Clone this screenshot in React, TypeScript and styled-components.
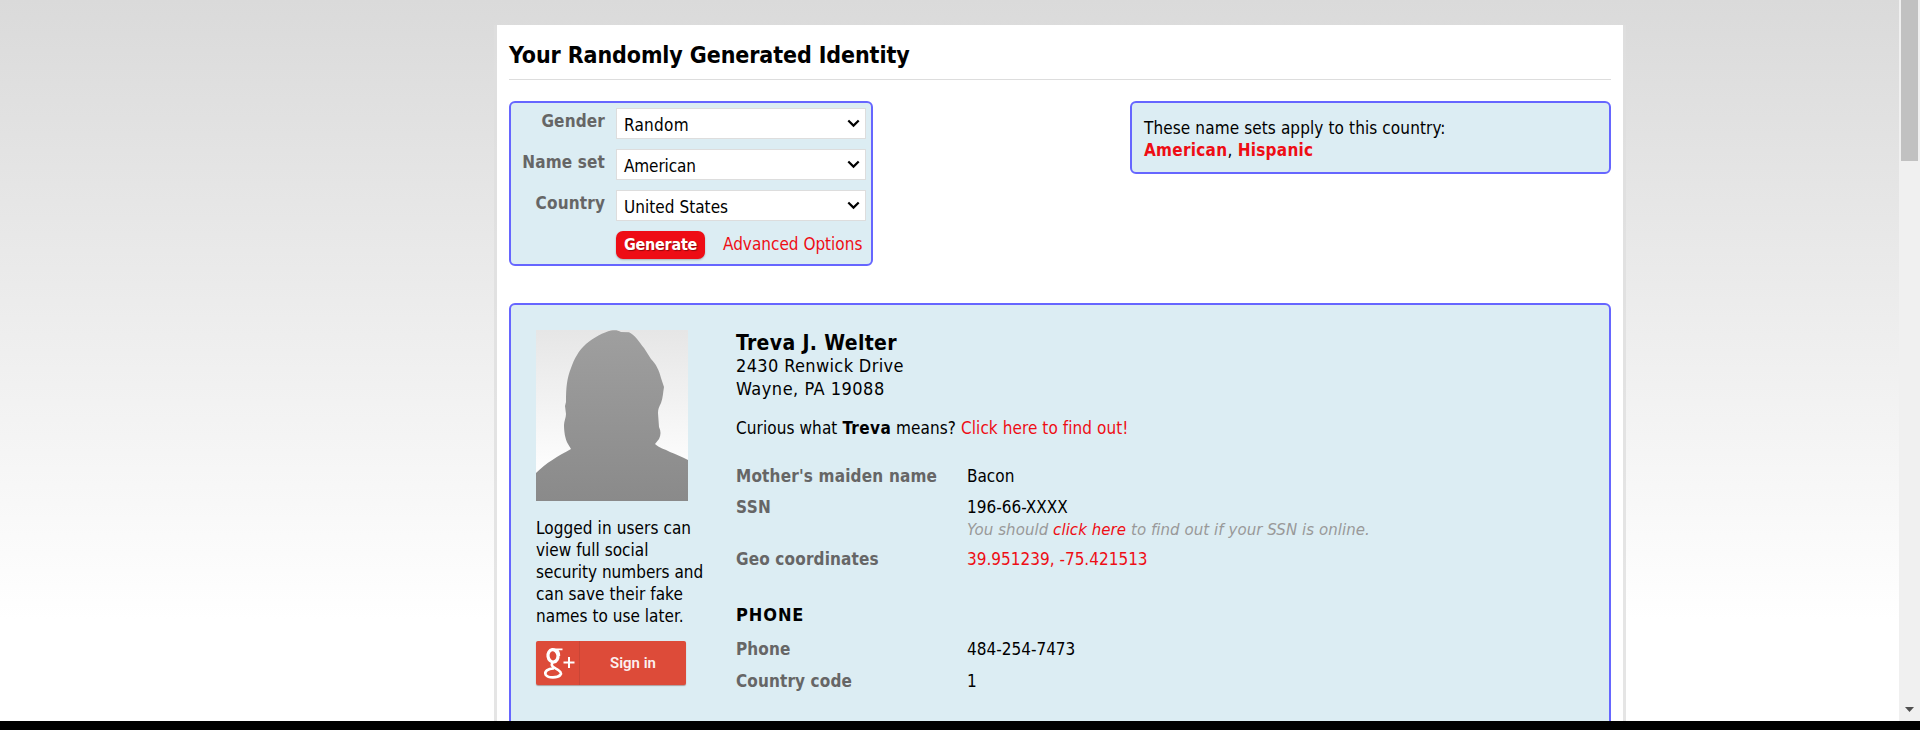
import React from 'react';
import styled, { createGlobalStyle } from 'styled-components';

const Global = createGlobalStyle`
  *, *::before, *::after { box-sizing: border-box; }
  html, body { margin: 0; padding: 0; }
  body {
    font-family: 'DejaVu Sans Condensed', 'DejaVu Sans', sans-serif;
    font-stretch: condensed;
    font-size: 17px;
    line-height: 22px;
    color: #000;
    white-space: nowrap;
    overflow: hidden;
  }
`;

const Screen = styled.div`
  height: 730px;
  display: flex;
  flex-direction: column;
  background: #000;
`;
const Viewport = styled.div`
  height: 721px;
  display: flex;
  overflow: hidden;
`;
const Page = styled.div`
  flex: 1;
  padding: 25px 0 0 494px;
  background: linear-gradient(#dadada 0, #ffffff 620px);
`;
const Sheet = styled.main`
  width: 1132px;
  height: 720px;
  padding: 0 12px;
  background: #fff;
  background-clip: padding-box;
  border: solid rgba(223, 223, 223, 0.8);
  border-width: 0 3px;
`;
const Title = styled.h1`
  margin: 0;
  height: 55px;
  padding-top: 16px;
  border-bottom: 1px solid #ddd;
  font-size: 23px;
  line-height: 28px;
`;
const TopRow = styled.div`
  display: flex;
  justify-content: space-between;
  align-items: flex-start;
  margin-top: 21px;
  height: 202px;
`;
const Panel = styled.section`
  background: #dcedf3;
  border: 2px solid #6666ff;
  border-radius: 6px;
`;
const FormPanel = styled(Panel)`
  width: 364px;
  height: 165px;
  padding-top: 5px;
`;
const NotePanel = styled(Panel)`
  width: 481px;
  height: 73px;
  padding: 14px 12px 0;
`;
const Field = styled.div`
  display: flex;
  height: 41px;
`;
const FieldLabel = styled.label`
  width: 94px;
  margin-right: 11px;
  padding-top: 2px;
  text-align: right;
  font-weight: bold;
  color: #666;
`;
const Select = styled.div`
  display: flex;
  align-items: center;
  justify-content: space-between;
  width: 250px;
  height: 31px;
  padding: 2px 5px 0 7px;
  background: #fff;
  border: 1px solid #ddd;
  svg { margin-top: -3px; }
`;
const Actions = styled.div`
  display: flex;
  padding-left: 105px;
`;
const Generate = styled.button`
  width: 89px;
  height: 28px;
  padding: 0;
  border: 0;
  border-radius: 7px;
  background: #ee0d15;
  box-shadow: 0 1px 2px rgba(0, 0, 0, 0.25);
  color: #fff;
  font: bold 16px/28px 'DejaVu Sans Condensed', 'DejaVu Sans', sans-serif;
  text-shadow: 1px 1px 1px rgba(0, 0, 0, 0.4);
`;
const Link = styled.a<{ $bold?: boolean }>`
  color: #ee0d15;
  font-weight: ${(p) => (p.$bold ? 'bold' : 'normal')};
`;
const Advanced = styled.div`
  margin: 2px 0 0 18px;
`;
const Identity = styled(Panel)`
  display: flex;
  height: 440px;
  padding: 25px;
`;
const Aside = styled.aside`
  width: 200px;
`;
const LoginNote = styled.p`
  margin: 16px 0 14px;
`;
const SignIn = styled.button`
  display: flex;
  width: 150px;
  height: 44px;
  padding: 0;
  border: 0;
  border-radius: 2px;
  background: #dd4b39;
  box-shadow: 0 1px 1px rgba(120, 60, 50, 0.45);
  color: #fff;
`;
const GoogleMark = styled.span`
  width: 44px;
  height: 44px;
  border-right: 1px solid #c94636;
`;
const SignInText = styled.span`
  flex: 1;
  text-align: center;
  font: 600 15px/45px Roboto, sans-serif;
  opacity: 0.92;
`;
const Details = styled.div`
  padding-top: 1px;
`;
const Name = styled.h3`
  margin: 0;
  font-size: 21px;
  line-height: 24px;
`;
const Address = styled.div`
  margin-top: -1px;
  font-size: 18px;
  line-height: 23px;
`;
const Meaning = styled.p`
  margin: 17px 0 0;
`;
const Heading = styled.h3`
  margin: 0;
  padding-top: 34px;
  font-size: 18px;
  line-height: 22px;
`;
const Row = styled.dl<{ $top: number }>`
  display: flex;
  margin: 0;
  padding-top: ${(p) => p.$top}px;
`;
const Term = styled.dt`
  width: 231px;
  font-weight: bold;
  color: #666;
`;
const Value = styled.dd`
  margin: 0;
`;
const Hint = styled.div`
  padding-top: 1px;
  font: italic 15px/22px 'DejaVu Sans', sans-serif;
  font-stretch: normal;
  color: #999;
`;
const T = styled.span<{ $ls: number }>`
  letter-spacing: ${(p) => p.$ls}px;
`;
const Scrollbar = styled.div`
  width: 21px;
  display: flex;
  flex-direction: column;
  justify-content: space-between;
  align-items: center;
  padding-bottom: 9px;
  background: #f0f0f0;
`;
const Thumb = styled.div`
  width: 17px;
  height: 161px;
  background: #c1c1c1;
`;

const Chevron = () => (
  <svg width="13" height="9" viewBox="0 0 13 9" fill="none" stroke="#000" strokeWidth="2.2">
    <path d="M1.3 1.500 6.500 6.600 11.700 1.500" />
  </svg>
);

const Photo = styled.svg`
  display: block;
`;

const Silhouette = () => (
  <Photo width="152" height="171" viewBox="0 0 152 171">
    <defs>
      <linearGradient id="bg" x1="0" y1="0" x2="0" y2="1">
        <stop offset="0" stopColor="#e6e6e6" />
        <stop offset="0.8" stopColor="#fdfdfd" />
      </linearGradient>
      <linearGradient id="fg" x1="0" y1="0" x2="0" y2="1">
        <stop offset="0" stopColor="#9f9f9f" />
        <stop offset="1" stopColor="#8a8a8a" />
      </linearGradient>
    </defs>
    <rect width="152" height="171" fill="url(#bg)" />
    <path
      fill="url(#fg)"
      d="M0 143C10 133 22 126 35 119L32 114C29 109 28 101 28 95C28 91 30 88 30 84L29 76L30 72C30 57 31 48 35 38C38 29 43 20 50 14C57 8 68 2 75 0.500C79 0 82 0 85 2L93 2.300C99 5 103 12 108 18L115 29C120 34 123 40 125 48L128 57C127 62 127 68 125 73C123 77 122 79 122 83L123 97C125 101 125 105 123 109L119 114C123 118 129 119 134 122C140 124 146 127 152 130V171H0Z"
    />
  </Photo>
);

const GooglePlus = () => (
  <svg width="43" height="44" viewBox="0 0 43 44">
    <g fill="none" stroke="#fff">
      <ellipse cx="17" cy="14.800" rx="5" ry="6.200" strokeWidth="3.200" transform="rotate(-8 17 14.800)" />
      <path strokeWidth="1.800" d="M16 8.300H26.500M20.500 8.500Q23.500 10.500 23.300 15" />
      <path strokeWidth="2.600" d="M17 21C14.500 24 16 25.300 19.500 27.300C24.500 30 26 32 24.300 34C21.500 37 12.500 37.300 9.800 34C7.800 30.500 12 27.300 18 27.500" />
      <path strokeWidth="2" d="M27.500 21.500H38.500M33 16V27" />
    </g>
  </svg>
);

type SelectFieldProps = { label: string; value: string; labelSpacing: number; valueSpacing: number };

const SelectField = ({ label, value, labelSpacing, valueSpacing }: SelectFieldProps) => (
  <Field>
    <FieldLabel><T $ls={labelSpacing}>{label}</T></FieldLabel>
    <Select><T $ls={valueSpacing}>{value}</T><Chevron /></Select>
  </Field>
);

export default function App() {
  return (
    <Screen>
      <Global />
      <Viewport>
        <Page>
          <Sheet>
            <Title><T $ls={-0.1}>Your Randomly Generated Identity</T></Title>
            <TopRow>
              <FormPanel>
                <SelectField label="Gender" value="Random" labelSpacing={0.15} valueSpacing={0.25} />
                <SelectField label="Name set" value="American" labelSpacing={0.15} valueSpacing={-0.12} />
                <SelectField label="Country" value="United States" labelSpacing={0.15} valueSpacing={0.04} />
                <Actions>
                  <Generate><T $ls={-0.25}>Generate</T></Generate>
                  <Advanced><Link><T $ls={0}>Advanced Options</T></Link></Advanced>
                </Actions>
              </FormPanel>
              <NotePanel>
                <T $ls={0.11}>These name sets apply to this country:</T><br />
                <T $ls={0.27}><Link $bold>American</Link>, <Link $bold>Hispanic</Link></T>
              </NotePanel>
            </TopRow>
            <Identity>
              <Aside>
                <Silhouette />
                <LoginNote>
                  <T $ls={0.09}>Logged in users can</T><br />
                  <T $ls={0.02}>view full social</T><br />
                  <T $ls={0}>security numbers and</T><br />
                  <T $ls={0.05}>can save their fake</T><br />
                  <T $ls={0.03}>names to use later.</T>
                </LoginNote>
                <SignIn>
                  <GoogleMark><GooglePlus /></GoogleMark>
                  <SignInText>Sign in</SignInText>
                </SignIn>
              </Aside>
              <Details>
                <Name><T $ls={0.35}>Treva J. Welter</T></Name>
                <Address>
                  <T $ls={0.36}>2430 Renwick Drive</T><br />
                  <T $ls={0.5}>Wayne, PA 19088</T>
                </Address>
                <Meaning>
                  <T $ls={0.09}>Curious what </T><T $ls={0.4}><b>Treva</b></T><T $ls={0.08}> means? </T>
                  <Link><T $ls={0.07}>Click here to find out!</T></Link>
                </Meaning>
                <Row $top={26}>
                  <Term><T $ls={0.18}>Mother's maiden name</T></Term>
                  <Value><T $ls={0}>Bacon</T></Value>
                </Row>
                <Row $top={9}>
                  <Term><T $ls={0.4}>SSN</T></Term>
                  <Value>
                    <T $ls={0}>196-66-XXXX</T>
                    <Hint><T $ls={0.06}>You should <Link>click here</Link> to find out if your SSN is online.</T></Hint>
                  </Value>
                </Row>
                <Row $top={7}>
                  <Term><T $ls={0.15}>Geo coordinates</T></Term>
                  <Value><Link><T $ls={0}>39.951239, -75.421513</T></Link></Value>
                </Row>
                <Heading><T $ls={0.9}>PHONE</T></Heading>
                <Row $top={12}>
                  <Term><T $ls={0.1}>Phone</T></Term>
                  <Value><T $ls={0}>484-254-7473</T></Value>
                </Row>
                <Row $top={10}>
                  <Term><T $ls={0.12}>Country code</T></Term>
                  <Value>1</Value>
                </Row>
              </Details>
            </Identity>
          </Sheet>
        </Page>
        <Scrollbar>
          <Thumb />
          <svg width="9" height="5" viewBox="0 0 9 5"><path d="M0 0H9L4.500 5Z" fill="#505050" /></svg>
        </Scrollbar>
      </Viewport>
    </Screen>
  );
}
